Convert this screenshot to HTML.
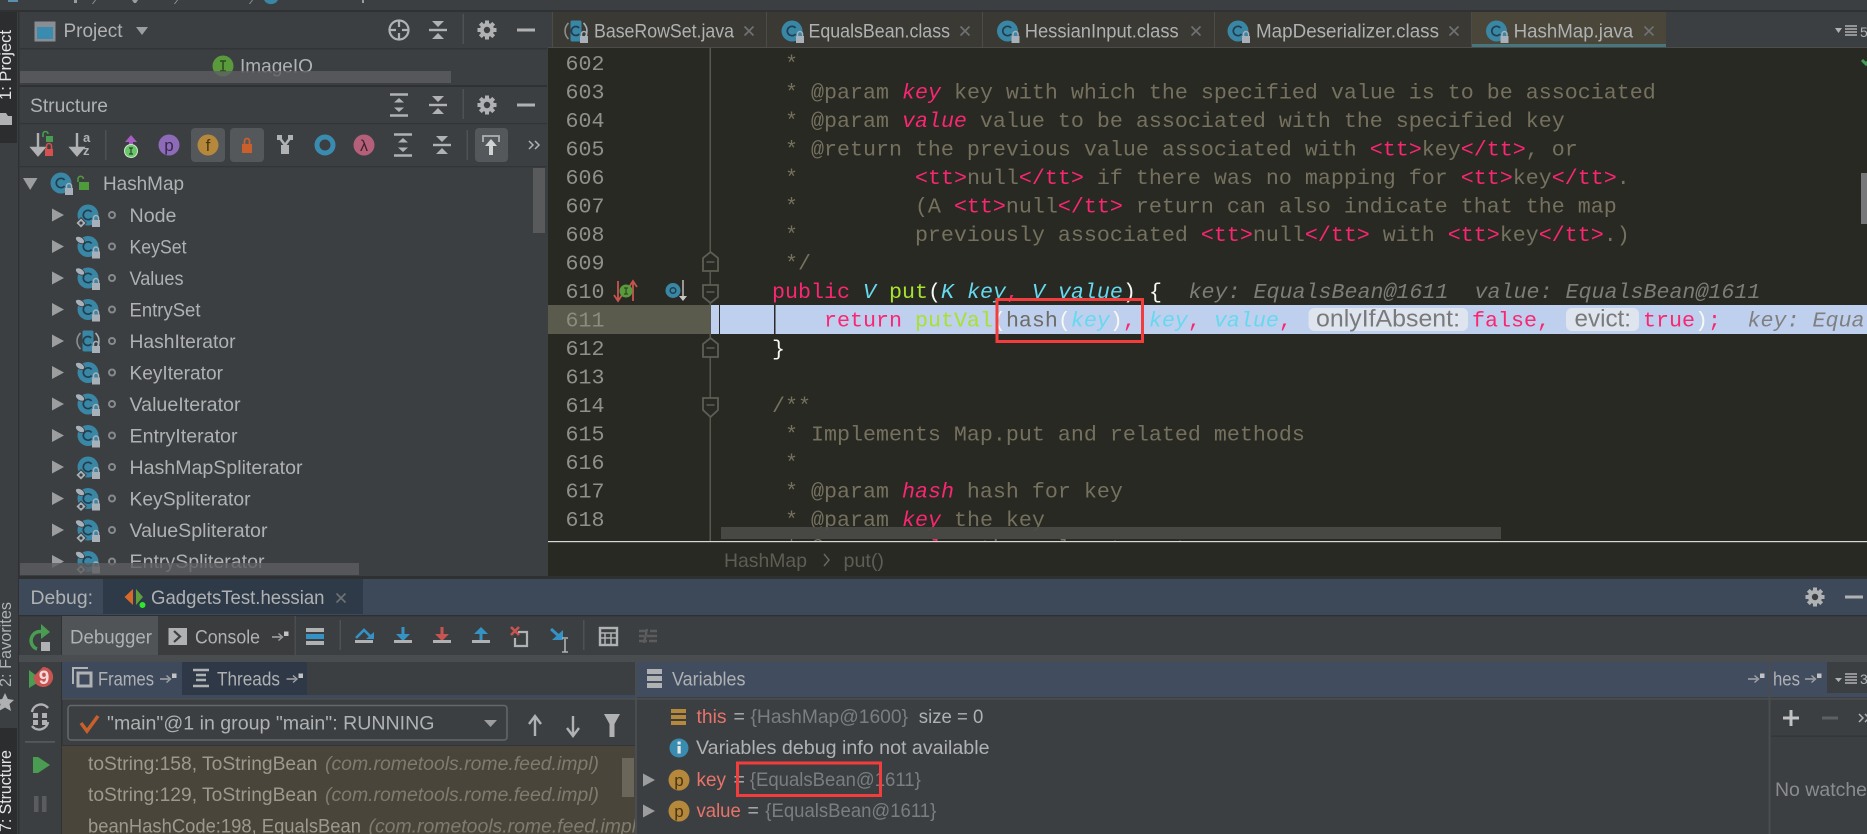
<!DOCTYPE html>
<html><head><meta charset="utf-8"><title>HashMap.java</title>
<style>
html,body{margin:0;padding:0;background:#3c3f41;width:1867px;height:834px;overflow:hidden}
svg{display:block;position:absolute;left:0;top:0}
text{white-space:pre}
.u{font-family:"Liberation Sans",sans-serif;font-size:19.5px;fill:#afb1b3}
.m{font-family:"Liberation Mono",monospace;font-size:21.66px;fill:#75715e}
.ln{fill:#8f908a}
.p{fill:#f92672}
.pi{fill:#f92672;font-style:italic}
.c{fill:#66d9ef;font-style:italic}
.g{fill:#a6e22e}
.w{fill:#f8f8f2}
.h{fill:#7d7d75;font-style:italic}
.hh{fill:#6c6c64}
.fr{fill:#9c9a8c}
.fi{fill:#7f7c6e;font-style:italic}
.v{fill:#e8736a}
.gy{fill:#7b7e80}
</style></head><body>
<svg width="1867" height="834" viewBox="0 0 1867 834" xmlns="http://www.w3.org/2000/svg">
<defs>
<clipPath id="edclip"><rect x="548" y="48" width="1319" height="493"/></clipPath>
<clipPath id="frclip"><rect x="62" y="746" width="573" height="88"/></clipPath>
<clipPath id="stclip"><rect x="19" y="166" width="528" height="410"/></clipPath>
<g id="lk"><path d="M-2.5-2V-4A2.5 2.5 0 0 1 2.5-4V-2" fill="none" stroke="#a8b1b9" stroke-width="1.5"/><rect x="-4" y="-2" width="8" height="7" fill="#a8b1b9"/></g>
<g id="cl"><circle r="10.5" fill="#3a86a5"/><path d="M3.6-3A4.7 4.7 0 1 0 3.6 3" fill="none" stroke="#1f3f50" stroke-width="1.7"/><use href="#lk" x="8" y="7"/></g>
<g id="abs"><path d="M-7.5-8A11 11 0 0 0-7.5 8" fill="none" stroke="#8a8e92" stroke-width="1.6"/><path d="M7.5-8A11 11 0 0 1 7.5 8" fill="none" stroke="#a8b1b9" stroke-width="1.6"/><rect x="-5.5" y="-10.5" width="11" height="21" rx="1.5" fill="#3a86a5"/><path d="M3.2-3A4.5 4.5 0 1 0 3.2 3" fill="none" stroke="#1f3f50" stroke-width="1.7"/><use href="#lk" x="8" y="7"/></g>
<g id="dm"><rect x="-3.7" y="-3.7" width="7.4" height="7.4" transform="rotate(45)" fill="#a8b1b9" stroke="#3c3f41"/><circle r="1.6" fill="#3c3f41"/></g>
<g id="fp"><ellipse rx="5" ry="3" transform="rotate(32)" fill="#a8b1b9" stroke="#3c3f41" stroke-width=".8"/></g>
<g id="dot"><circle r="3" fill="none" stroke="#868a8e" stroke-width="2"/></g>
<polygon id="tri" points="0,-6.5 12,0 0,6.5" fill="#9b9d9f"/>
<g id="gear"><g stroke="#afb1b3" stroke-width="4"><path d="M-9.5 0H9.5M0-9.5V9.5M-6.7-6.7 6.7 6.7M-6.7 6.7 6.7-6.7"/></g><circle r="7" fill="#afb1b3"/><circle r="3.2" fill="#3c3f41"/></g>
<g id="col"><path d="M-6-9H6L0-3ZM-6 9H6L0 3Z" fill="#afb1b3"/><rect x="-9" y="-1.2" width="18" height="2.4" fill="#afb1b3"/></g>
<g id="exp"><path d="M-9-10.5H9M-9 10.5H9" stroke="#afb1b3" stroke-width="2.6"/><path d="M-5-2.5H5L0-7ZM-5 2.5H5L0 7Z" fill="#afb1b3"/></g>
<g id="pin"><path d="M0 1H9" stroke="#a0a2a4" stroke-width="1.6"/><path d="M6.5-2.5 10.5 1 6.5 4.5" fill="none" stroke="#a0a2a4" stroke-width="1.4"/><rect x="12" y="-4.5" width="4.5" height="4.5" fill="#c0c2c4"/></g>
<g id="x"><path d="M-4.5-4.5 4.5 4.5M-4.5 4.5 4.5-4.5" stroke="#6f7274" stroke-width="1.6"/></g>
<g id="us"><rect x="-9" y="7" width="18" height="3" fill="#afb1b3"/></g>
</defs>

<!-- base -->
<rect width="1867" height="834" fill="#3c3f41"/>
<rect x="0" y="10" width="1867" height="2" fill="#2f3133"/>
<!-- top breadcrumb remnants -->
<g fill="#9a9c9e"><rect x="74" y="0" width="3" height="3"/><path d="M92 4 95 0H96L93 4Z"/><path d="M132 0 134 3H136L138 0Z"/><path d="M174 4 177 0H178L175 4Z"/><path d="M249 4 252 0H253L250 4Z"/><rect x="362" y="0" width="2" height="3"/><rect x="8" y="0" width="10" height="2" fill="#5b8fb0"/></g>
<path d="M264 0A8 8 0 0 0 278 0Z" fill="#3a86a5"/>

<!-- left stripe -->
<rect x="0" y="12" width="18" height="822" fill="#3c3f41"/>
<rect x="18" y="12" width="1.4" height="822" fill="#2f3133"/>
<rect x="0" y="12" width="17" height="131" fill="#2b2d2f"/>
<rect x="0" y="728" width="17" height="106" fill="#2b2d2f"/>
<text class="u" transform="translate(11,100) rotate(-90)" textLength="70" lengthAdjust="spacingAndGlyphs" style="font-size:17px;fill:#e6e6e6">1: Project</text>
<path d="M0 113H6L8 116H12V125H0Z" fill="#afb1b3"/>
<text class="u" transform="translate(11,687) rotate(-90)" textLength="85" lengthAdjust="spacingAndGlyphs" style="font-size:17px;fill:#afb1b3">2: Favorites</text>
<path d="M5 693 7.8 699 14 700 9.5 704 11 711 5 707.5-1 711 .5 704-4 700 2.2 699Z" fill="#afb1b3"/>
<text class="u" transform="translate(11,832) rotate(-90)" textLength="82" lengthAdjust="spacingAndGlyphs" style="font-size:17px;fill:#e6e6e6">7: Structure</text>

<!-- Project panel -->
<rect x="19" y="48" width="528" height="1.5" fill="#323437"/>
<rect x="34.5" y="21.5" width="21" height="20" fill="#8a8e92"/><rect x="37" y="27" width="16" height="12" fill="#3a8bb0"/>
<text class="u" x="63.5" y="37" textLength="59" lengthAdjust="spacingAndGlyphs">Project</text>
<path d="M136 27H148L142 35Z" fill="#9b9d9f"/>
<g stroke="#afb1b3" fill="none" stroke-width="2.2"><circle cx="399" cy="30" r="9.5"/><path d="M399 20V27M399 33V40M389 30H396M402 30H409"/></g>
<use href="#col" x="438" y="30"/>
<rect x="462.5" y="14" width="1.5" height="30" fill="#4e5254"/>
<use href="#gear" x="487" y="30"/>
<rect x="517" y="28.5" width="18" height="3" fill="#afb1b3"/>
<circle cx="223" cy="66" r="10.5" fill="#5a9a3c"/><path d="M220 61H226M223 61V71M220 71H226" stroke="#2b4a1d" stroke-width="1.5" fill="none"/>
<text class="u" x="240" y="72.5" textLength="73" lengthAdjust="spacingAndGlyphs">ImageIO</text>
<rect x="20" y="71" width="431" height="12" fill="#5c5e60" fill-opacity=".8"/>
<rect x="19" y="85" width="528" height="2" fill="#2f3133"/>

<!-- Structure panel -->
<text class="u" x="30" y="112" textLength="78" lengthAdjust="spacingAndGlyphs">Structure</text>
<use href="#exp" x="399" y="105"/><use href="#col" x="438" y="105"/>
<rect x="462.5" y="89" width="1.5" height="30" fill="#4e5254"/>
<use href="#gear" x="487" y="105"/>
<rect x="517" y="103.5" width="18" height="3" fill="#afb1b3"/>
<rect x="19" y="123" width="528" height="1.3" fill="#323437"/>
<rect x="19" y="166" width="528" height="1.3" fill="#323437"/>
<!-- toolbar -->
<path d="M38 133V150M32 148 38 155 44 148Z" stroke="#afb1b3" stroke-width="2.4" fill="#afb1b3"/>
<rect x="46" y="136" width="7" height="6" fill="#4a9c52"/><path d="M43 137V134A2.5 2.5 0 0 1 48 134" stroke="#4a9c52" stroke-width="1.6" fill="none"/>
<rect x="45" y="149" width="8" height="7" fill="#d75050"/><path d="M46.5 149V146A2.5 2.5 0 0 1 51.5 146V149" stroke="#d75050" stroke-width="1.6" fill="none"/>
<path d="M77 133V150M71 148 77 155 83 148Z" stroke="#afb1b3" stroke-width="2.4" fill="#afb1b3"/>
<text class="u" x="83" y="142" style="font-size:13px;font-weight:bold">a</text><text class="u" x="83" y="155" style="font-size:13px;font-weight:bold">z</text>
<rect x="105" y="130" width="1.5" height="30" fill="#4e5254"/>
<path d="M125 142 131 135 137 142H133V146H129V142Z" fill="#a65fc0"/>
<circle cx="131" cy="151" r="6.5" fill="#6ac66a" stroke="#cfe8cf"/><path d="M129 148H133M131 148V154M129 154H133" stroke="#274a27" stroke-width="1.2"/>
<circle cx="169" cy="145" r="10.5" fill="#8d6bb8"/><text class="u" x="169" y="151" text-anchor="middle" style="font-size:17px;fill:#35284a">p</text>
<rect x="191" y="128" width="34" height="34" rx="4" fill="#54585b"/>
<circle cx="208" cy="145" r="10.5" fill="#b5883c"/><text class="u" x="208" y="151" text-anchor="middle" style="font-size:17px;fill:#4a3510">f</text>
<rect x="230" y="128" width="34" height="34" rx="4" fill="#54585b"/>
<rect x="242" y="144" width="10" height="9" fill="#c9602c"/><path d="M244.5 144V141A2.5 2.5 0 0 1 249.5 141V144" stroke="#c9602c" stroke-width="1.8" fill="none"/>
<path d="M279 137 285 145 291 137" stroke="#afb1b3" stroke-width="2.6" fill="none"/><rect x="277" y="135" width="5" height="5" fill="#afb1b3"/><rect x="288" y="135" width="5" height="5" fill="#afb1b3"/><rect x="281" y="145" width="8" height="9" fill="#afb1b3"/>
<circle cx="325" cy="145" r="8" fill="none" stroke="#3a8bb0" stroke-width="5"/>
<circle cx="364" cy="145" r="10.5" fill="#b5607a"/><text class="u" x="364" y="151" text-anchor="middle" style="font-size:16px;fill:#3d1f2a">λ</text>
<use href="#exp" x="403" y="145"/><use href="#col" x="442" y="145"/>
<rect x="466.5" y="130" width="1.5" height="30" fill="#4e5254"/>
<rect x="475" y="128" width="33" height="34" rx="4" fill="#54585b"/>
<path d="M483 142V136H499V142" stroke="#afb1b3" stroke-width="1.8" fill="none"/><path d="M491 139 497 146H493V155H489V146H485Z" fill="#d0d2d4"/>
<path d="M529 141 533 145 529 149M535 141 539 145 535 149" stroke="#afb1b3" stroke-width="1.5" fill="none"/>

<!-- tree -->
<g clip-path="url(#stclip)">
<polygon points="23,178 37.5,178 30.2,190" fill="#9b9d9f"/>
<use href="#cl" x="61" y="183"/>
<rect x="79" y="182" width="10" height="8" fill="#4f9b3c"/><path d="M78 182V179A2.7 2.7 0 0 1 83.400 179" stroke="#4f9b3c" stroke-width="1.6" fill="none"/>
<text class="u" x="103" y="190" textLength="81" lengthAdjust="spacingAndGlyphs">HashMap</text>

<use href="#tri" x="52" y="215"/><use href="#cl" x="88" y="215"/><use href="#dm" x="81" y="223"/><use href="#dot" x="112" y="215"/><text class="u" x="129.500" y="222" textLength="47" lengthAdjust="spacingAndGlyphs">Node</text>
<use href="#tri" x="52" y="246.500"/><use href="#cl" x="88" y="246.500"/><use href="#fp" x="80" y="240"/><use href="#dot" x="112" y="246.500"/><text class="u" x="129.500" y="253.500" textLength="57" lengthAdjust="spacingAndGlyphs">KeySet</text>
<use href="#tri" x="52" y="278"/><use href="#cl" x="88" y="278"/><use href="#fp" x="80" y="271.500"/><use href="#dot" x="112" y="278"/><text class="u" x="129.500" y="285" textLength="54" lengthAdjust="spacingAndGlyphs">Values</text>
<use href="#tri" x="52" y="309.500"/><use href="#cl" x="88" y="309.500"/><use href="#fp" x="80" y="303"/><use href="#dot" x="112" y="309.500"/><text class="u" x="129.500" y="316.500" textLength="71" lengthAdjust="spacingAndGlyphs">EntrySet</text>
<use href="#tri" x="52" y="341"/><use href="#abs" x="88" y="341"/><use href="#dot" x="112" y="341"/><text class="u" x="129.500" y="348" textLength="106" lengthAdjust="spacingAndGlyphs">HashIterator</text>
<use href="#tri" x="52" y="372.500"/><use href="#cl" x="88" y="372.500"/><use href="#fp" x="80" y="366"/><use href="#dot" x="112" y="372.500"/><text class="u" x="129.500" y="379.500" textLength="93.500" lengthAdjust="spacingAndGlyphs">KeyIterator</text>
<use href="#tri" x="52" y="404"/><use href="#cl" x="88" y="404"/><use href="#fp" x="80" y="397.500"/><use href="#dot" x="112" y="404"/><text class="u" x="129.500" y="411" textLength="111" lengthAdjust="spacingAndGlyphs">ValueIterator</text>
<use href="#tri" x="52" y="435.500"/><use href="#cl" x="88" y="435.500"/><use href="#fp" x="80" y="429"/><use href="#dot" x="112" y="435.500"/><text class="u" x="129.500" y="442.500" textLength="108" lengthAdjust="spacingAndGlyphs">EntryIterator</text>
<use href="#tri" x="52" y="467"/><use href="#cl" x="88" y="467"/><use href="#dm" x="81" y="475"/><use href="#dot" x="112" y="467"/><text class="u" x="129.500" y="474" textLength="173" lengthAdjust="spacingAndGlyphs">HashMapSpliterator</text>
<use href="#tri" x="52" y="498.500"/><use href="#cl" x="88" y="498.500"/><use href="#fp" x="80" y="492"/><use href="#dm" x="81" y="506.500"/><use href="#dot" x="112" y="498.500"/><text class="u" x="129.500" y="505.500" textLength="121" lengthAdjust="spacingAndGlyphs">KeySpliterator</text>
<use href="#tri" x="52" y="530"/><use href="#cl" x="88" y="530"/><use href="#fp" x="80" y="523.500"/><use href="#dm" x="81" y="538"/><use href="#dot" x="112" y="530"/><text class="u" x="129.500" y="537" textLength="138" lengthAdjust="spacingAndGlyphs">ValueSpliterator</text>
<use href="#tri" x="52" y="561.500"/><use href="#cl" x="88" y="561.500"/><use href="#fp" x="80" y="555"/><use href="#dm" x="81" y="569.500"/><use href="#dot" x="112" y="561.500"/><text class="u" x="129.500" y="568" textLength="135" lengthAdjust="spacingAndGlyphs">EntrySpliterator</text>
</g>
<rect x="533" y="168" width="12" height="65" fill="#585a5c"/>
<rect x="20" y="563" width="339" height="12" fill="#5c5e60" fill-opacity=".8"/>

<!-- tabs -->
<rect x="548" y="12" width="1319" height="36" fill="#3c3f41"/>
<rect x="552" y="12" width="1114" height="36" fill="#3a3933"/>
<rect x="1471" y="12" width="195" height="32" fill="#4a463a"/>
<rect x="1471" y="44" width="195" height="4" fill="#47767e"/>
<g fill="#4c4c48"><rect x="552" y="12" width="1" height="36"/><rect x="766" y="12" width="1" height="36"/><rect x="982" y="12" width="1" height="36"/><rect x="1214" y="12" width="1" height="36"/><rect x="1471" y="12" width="1" height="36"/></g>
<rect x="548" y="47" width="1319" height="1.300" fill="#4c4d4a"/>
<use href="#abs" x="576" y="31"/><text class="u" x="594" y="37.500" textLength="140" lengthAdjust="spacingAndGlyphs">BaseRowSet.java</text><use href="#x" x="749" y="31"/>
<use href="#cl" x="792" y="31"/><text class="u" x="808.500" y="37.500" textLength="141.500" lengthAdjust="spacingAndGlyphs">EqualsBean.class</text><use href="#x" x="965" y="31"/>
<use href="#cl" x="1007.500" y="31"/><text class="u" x="1024.700" y="37.500" textLength="154" lengthAdjust="spacingAndGlyphs">HessianInput.class</text><use href="#x" x="1196" y="31"/>
<use href="#cl" x="1238" y="31"/><text class="u" x="1256" y="37.500" textLength="183" lengthAdjust="spacingAndGlyphs">MapDeserializer.class</text><use href="#x" x="1454" y="31"/>
<use href="#cl" x="1496.500" y="31"/><text class="u" x="1513.600" y="37.500" textLength="119.500" lengthAdjust="spacingAndGlyphs">HashMap.java</text><use href="#x" x="1649" y="31"/>
<path d="M1835 28H1842L1838.500 33Z" fill="#afb1b3"/><path d="M1845 26H1857M1845 29H1857M1845 32H1857M1845 35H1857" stroke="#afb1b3" stroke-width="1.500"/>
<text class="u" x="1860" y="37" style="font-size:14px">5</text>

<!-- editor -->
<rect x="548" y="48" width="1319" height="529" fill="#282923"/>
<rect x="548" y="305" width="163" height="29" fill="#5b5b4d"/>
<rect x="711" y="305" width="1156" height="29" fill="#bfcfee"/>
<rect x="709.500" y="48" width="1.500" height="493" fill="#58584e"/>
<rect x="719" y="305" width="1" height="29" fill="#2a2a2a"/>
<rect x="774" y="305" width="1.500" height="29" fill="#2a2a2a"/>
<!-- fold markers -->
<g fill="#282923" stroke="#5e5e54" stroke-width="1.800">
<path d="M703 271V258L710.500 252 718 258V271Z"/><path d="M703 285H718V297L710.500 303 703 297Z"/><path d="M703 357V344L710.500 338 718 344V357Z"/><path d="M703 398H718V410L710.500 417 703 410Z"/>
</g>
<path d="M706.500 262H714.500M706.500 292H714.500M706.500 348H714.500M706.500 405H714.500" stroke="#5e5e54" stroke-width="1.500"/>
<!-- gutter icons -->
<path d="M618 281V299M614 295 618 301 622 295" stroke="#c75450" stroke-width="1.800" fill="none"/>
<path d="M633 301V283M629 287 633 281 637 287" stroke="#c75450" stroke-width="1.800" fill="none"/>
<circle cx="626" cy="291" r="6.500" fill="#5a9a3c"/><path d="M624 288H628M626 288V294M624 294H628" stroke="#2b4a1d" stroke-width="1.200"/>
<circle cx="673" cy="290.500" r="7.500" fill="#3a86a5"/><circle cx="673" cy="290.500" r="2.800" fill="none" stroke="#1f3f50" stroke-width="1.500"/>
<path d="M683 280V296" stroke="#c8c8c8" stroke-width="1.400"/><path d="M679 296H687L683 301Z" fill="#c8c8c8"/>

<!-- line numbers -->
<g class="m ln">
<text class="m ln" x="565.500" y="70">602</text><text class="m ln" x="565.500" y="98.500">603</text><text class="m ln" x="565.500" y="127">604</text><text class="m ln" x="565.500" y="155.500">605</text><text class="m ln" x="565.500" y="184">606</text><text class="m ln" x="565.500" y="212.500">607</text><text class="m ln" x="565.500" y="241">608</text><text class="m ln" x="565.500" y="269.500">609</text><text class="m ln" x="565.500" y="298">610</text><text class="m" x="565.500" y="326.500" style="fill:#8c8c7e">611</text><text class="m ln" x="565.500" y="355">612</text><text class="m ln" x="565.500" y="383.500">613</text><text class="m ln" x="565.500" y="412">614</text><text class="m ln" x="565.500" y="440.500">615</text><text class="m ln" x="565.500" y="469">616</text><text class="m ln" x="565.500" y="497.500">617</text><text class="m ln" x="565.500" y="526">618</text>
</g>

<!-- code -->
<g clip-path="url(#edclip)">
<text class="m" x="720" y="70">     *</text>
<text class="m" x="720" y="98.500">     * @param <tspan class="pi">key</tspan> key with which the specified value is to be associated</text>
<text class="m" x="720" y="127">     * @param <tspan class="pi">value</tspan> value to be associated with the specified key</text>
<text class="m" x="720" y="155.500">     * @return the previous value associated with <tspan class="p">&lt;tt&gt;</tspan>key<tspan class="p">&lt;/tt&gt;</tspan>, or</text>
<text class="m" x="720" y="184">     *         <tspan class="p">&lt;tt&gt;</tspan>null<tspan class="p">&lt;/tt&gt;</tspan> if there was no mapping for <tspan class="p">&lt;tt&gt;</tspan>key<tspan class="p">&lt;/tt&gt;</tspan>.</text>
<text class="m" x="720" y="212.500">     *         (A <tspan class="p">&lt;tt&gt;</tspan>null<tspan class="p">&lt;/tt&gt;</tspan> return can also indicate that the map</text>
<text class="m" x="720" y="241">     *         previously associated <tspan class="p">&lt;tt&gt;</tspan>null<tspan class="p">&lt;/tt&gt;</tspan> with <tspan class="p">&lt;tt&gt;</tspan>key<tspan class="p">&lt;/tt&gt;</tspan>.)</text>
<text class="m" x="720" y="269.500">     */</text>
<text class="m" x="720" y="298">    <tspan class="p">public</tspan> <tspan class="c">V</tspan> <tspan class="g">put</tspan><tspan class="w">(</tspan><tspan class="c">K key</tspan><tspan class="p">,</tspan> <tspan class="c">V value</tspan><tspan class="w">)</tspan> <tspan class="w">{</tspan></text>
<text class="m h" x="1188.500" y="298">key: EqualsBean@1611</text>
<text class="m h" x="1474.500" y="298">value: EqualsBean@1611</text>
<!-- line 611 -->
<text class="m" x="720" y="326.500">        <tspan class="p">return</tspan> <tspan class="g">putVal</tspan><tspan class="w">(</tspan><tspan class="hh">hash</tspan><tspan class="w">(</tspan><tspan class="c">key</tspan><tspan class="w">)</tspan><tspan class="p">,</tspan> <tspan class="c">key</tspan><tspan class="p">,</tspan> <tspan class="c">value</tspan><tspan class="p">,</tspan></text>
<rect x="1308.500" y="308" width="159.500" height="23" rx="6" fill="#dfe5ee"/>
<text class="u" x="1316" y="326.500" textLength="144" lengthAdjust="spacingAndGlyphs" style="font-size:24.5px;fill:#7a7a7a">onlyIfAbsent:</text>
<text class="m p" x="1472" y="326.500">false,</text>
<rect x="1566" y="308" width="73" height="23" rx="6" fill="#dfe5ee"/>
<text class="u" x="1574.500" y="326.500" textLength="56.500" lengthAdjust="spacingAndGlyphs" style="font-size:24.5px;fill:#7a7a7a">evict:</text>
<text class="m p" x="1643" y="326.500">true<tspan class="w">)</tspan>;</text>
<text class="m h" x="1747.500" y="326.500" style="fill:#7f7f7f">key: Equa</text>
<text class="m w" x="720" y="355">    }</text>
<text class="m" x="720" y="412">    /**</text>
<text class="m" x="720" y="440.500">     * Implements Map.put and related methods</text>
<text class="m" x="720" y="469">     *</text>
<text class="m" x="720" y="497.500">     * @param <tspan class="pi">hash</tspan> hash for key</text>
<text class="m" x="720" y="526">     * @param <tspan class="pi">key</tspan> the key</text>
<text class="m" x="720" y="554.500">     * @param <tspan class="pi">value</tspan> the value to put</text>
</g>
<rect x="721" y="527" width="780" height="12" fill="#4a4a46" fill-opacity=".92"/>
<rect x="548" y="541" width="1319" height="1.200" fill="#d8d8d8"/>
<path d="M1856 60 1860 64 1867 56" stroke="#499c54" stroke-width="3" fill="none" transform="translate(6,0)"/>
<rect x="1861" y="173" width="6" height="51" fill="#78787a"/>
<!-- breadcrumbs -->
<text class="u" x="724" y="567" textLength="83" lengthAdjust="spacingAndGlyphs" style="fill:#5e5e55">HashMap</text>
<path d="M824 554 829 560 824 566" fill="none" stroke="#6a6a60" stroke-width="1.400"/>
<text class="u" x="843.500" y="567" textLength="40.500" lengthAdjust="spacingAndGlyphs" style="fill:#5e5e55">put()</text>
<!-- red box -->
<rect x="997" y="299.500" width="145.500" height="42" fill="none" stroke="#f33c3c" stroke-width="3"/>

<!-- debug -->
<rect x="19" y="576" width="1848" height="3" fill="#2e3032"/>
<rect x="19" y="579" width="1848" height="36" fill="#3d4958"/>
<rect x="103" y="579" width="260" height="35" fill="#2f3a48"/>
<rect x="19" y="615" width="1848" height="1.300" fill="#2c3138"/>
<text class="u" x="30.500" y="604" textLength="62.500" lengthAdjust="spacingAndGlyphs">Debug:</text>
<path d="M133 589 124.500 597 133 605Z" fill="#d9682b"/><path d="M136 589 143 597 136 605Z" fill="#5f9e3c"/><circle cx="142.500" cy="605" r="3" fill="#2ee82e"/>
<text class="u" x="151" y="604" textLength="173.500" lengthAdjust="spacingAndGlyphs">GadgetsTest.hessian</text>
<use href="#x" x="341" y="598"/>
<use href="#gear" x="1815" y="597"/>
<rect x="1845" y="595.500" width="18" height="3" fill="#afb1b3"/>

<!-- debug left bar -->
<rect x="61" y="616" width="1.400" height="218" fill="#2f3133"/>
<path d="M45 633A9 9 0 1 0 37 649" fill="none" stroke="#4a9c52" stroke-width="3.500"/><path d="M41 624 50 632 41 639Z" fill="#4a9c52"/>
<rect x="41" y="642" width="9" height="9" fill="#afb1b3"/>
<path d="M29 670 42 680 29 688Z" fill="#4a9c52"/><path d="M43 667A10 10 0 1 1 36 684L33 677Z" fill="#c75450"/><text class="u" x="44" y="684" text-anchor="middle" style="font-size:19px;font-weight:bold;fill:#f0d8d8">9</text>
<g stroke="#afb1b3" fill="none" stroke-width="2.400"><path d="M32 712A9 9 0 0 1 48 708"/><path d="M48 722A9 9 0 0 1 32 726"/></g>
<g fill="#afb1b3"><rect x="33" y="713" width="5" height="5"/><rect x="42" y="713" width="5" height="5"/><rect x="33" y="720" width="5" height="5"/><rect x="42" y="720" width="5" height="5"/></g>
<rect x="25" y="741" width="30" height="1.800" fill="#55585a"/>
<rect x="33" y="757" width="5" height="16" fill="#4a9c52"/><path d="M38 757 50 765 38 773Z" fill="#4a9c52"/>
<rect x="34" y="796" width="4.500" height="16" fill="#5a5c5e"/><rect x="42" y="796" width="4.500" height="16" fill="#5a5c5e"/>

<!-- debugger tabs -->
<rect x="62" y="616" width="96" height="39" fill="#505456"/>
<rect x="158" y="616" width="137" height="39" fill="#3a3c3e"/>
<rect x="294.500" y="616" width="1.500" height="39" fill="#4a4d4f"/>
<text class="u" x="70" y="643.500" textLength="82" lengthAdjust="spacingAndGlyphs">Debugger</text>
<rect x="168.500" y="628" width="18.500" height="17" fill="#afb1b3"/><path d="M174 631 180 636.500 174 642" fill="none" stroke="#3c3f41" stroke-width="2.200"/>
<text class="u" x="195" y="643.500" textLength="65" lengthAdjust="spacingAndGlyphs">Console</text>
<use href="#pin" x="272" y="636"/>
<rect x="306" y="628" width="18" height="4" fill="#afb1b3"/><rect x="306" y="634" width="18" height="5" fill="#3592c4"/><rect x="306" y="641" width="18" height="4" fill="#afb1b3"/>
<rect x="339.500" y="620" width="1.500" height="30" fill="#4e5254"/>
<path d="M356 638 364 630 372 638" fill="none" stroke="#3592c4" stroke-width="2.600"/><path d="M366 639H374V632Z" fill="#3592c4"/><use href="#us" x="364" y="633"/>
<path d="M403 627V636" stroke="#3592c4" stroke-width="3"/><path d="M396 634H410L403 641Z" fill="#3592c4"/><use href="#us" x="403" y="633"/>
<path d="M442 627V636" stroke="#c75450" stroke-width="3"/><path d="M435 634H449L442 641Z" fill="#c75450"/><use href="#us" x="442" y="633"/>
<path d="M481 641V632" stroke="#3592c4" stroke-width="3"/><path d="M474 634H488L481 627Z" fill="#3592c4"/><use href="#us" x="481" y="633"/>
<path d="M511 627 519 635M519 627 511 635" stroke="#c75450" stroke-width="2.600"/><path d="M518 632H527V646H515V638" fill="none" stroke="#afb1b3" stroke-width="2.200"/>
<path d="M551 629 561 638" stroke="#3592c4" stroke-width="3"/><path d="M552 640H563V630Z" fill="#3592c4"/><path d="M565 639V652M562 638H568M562 652H568" stroke="#afb1b3" stroke-width="1.600" fill="none"/>
<rect x="583" y="620" width="1.500" height="30" fill="#4e5254"/>
<rect x="600" y="628" width="17" height="17" fill="none" stroke="#afb1b3" stroke-width="2.400"/><path d="M600 633H617M600 638H617M605 633V645M611 633V645" stroke="#afb1b3" stroke-width="1.500"/>
<path d="M639 641H647M649 641H657M639 636H644M647 636H657M639 631H647M650 631H657M647 629 644 643" stroke="#5a5c5e" stroke-width="2.400" fill="none"/>
<rect x="19" y="655" width="1848" height="7" fill="#4a4d4f"/>

<!-- frames header -->
<rect x="62" y="662" width="574" height="36" fill="#3c3f41"/>
<rect x="62" y="662" width="120" height="36" fill="#3e4a5c"/>
<rect x="182" y="662" width="125" height="33" fill="#2e3846"/>
<rect x="62" y="695" width="574" height="3" fill="#3e4a5c"/>
<path d="M73 684V668H88" fill="none" stroke="#afb1b3" stroke-width="2"/><rect x="78" y="673" width="13" height="13" fill="none" stroke="#afb1b3" stroke-width="3"/>
<text class="u" x="98" y="685.500" textLength="56" lengthAdjust="spacingAndGlyphs">Frames</text>
<use href="#pin" x="160" y="678"/>
<path d="M193 670H209M196 675H206M196 680H206M193 686H209" stroke="#afb1b3" stroke-width="2.600"/>
<text class="u" x="217" y="685.500" textLength="63" lengthAdjust="spacingAndGlyphs">Threads</text>
<use href="#pin" x="286.500" y="678"/>
<rect x="636" y="662" width="1231" height="35" fill="#414c5e"/>
<rect x="635" y="662" width="2" height="172" fill="#4a4d4f"/>
<rect x="62" y="698" width="1805" height="1.800" fill="#4a4d4f"/>
<rect x="647" y="669" width="15" height="5" fill="#afb1b3"/><rect x="647" y="676" width="15" height="5" fill="#afb1b3"/><rect x="647" y="683" width="15" height="5" fill="#afb1b3"/>
<text class="u" x="672" y="685.500" textLength="73.500" lengthAdjust="spacingAndGlyphs">Variables</text>
<use href="#pin" x="1748" y="678"/>
<text class="u" x="1773" y="685.500" textLength="27" lengthAdjust="spacingAndGlyphs">hes</text>
<use href="#pin" x="1805" y="678"/>
<rect x="1827" y="662" width="40" height="31" fill="#3c3f41"/>
<path d="M1835 678H1842L1838.500 682Z" fill="#afb1b3"/><path d="M1845 674H1857M1845 677H1857M1845 680H1857M1845 683H1857" stroke="#afb1b3" stroke-width="1.500"/>
<text class="u" x="1860" y="684" style="font-size:14px">3</text>

<!-- combo -->
<rect x="68" y="705.500" width="439" height="34.500" rx="3" fill="#3c3f41" stroke="#65686a" stroke-width="1.500"/>
<path d="M81 723 87 731 98 716" fill="none" stroke="#c9602c" stroke-width="3.500"/>
<text class="u" x="107" y="729.500" textLength="327.500" lengthAdjust="spacingAndGlyphs">"main"@1 in group "main": RUNNING</text>
<path d="M484 720H497L490.500 727Z" fill="#9b9d9f"/>
<path d="M535 736V717M529 724 535 716 541 724" fill="none" stroke="#afb1b3" stroke-width="2.400"/>
<path d="M573 716V735M567 728 573 736 579 728" fill="none" stroke="#afb1b3" stroke-width="2.400"/>
<path d="M604 714H620L614.500 724V737H609.500V724Z" fill="#afb1b3"/>
<rect x="62" y="745" width="573" height="1.300" fill="#323437"/>

<!-- frame list -->
<rect x="62" y="746" width="573" height="88" fill="#4a453a"/>
<g clip-path="url(#frclip)">
<text class="u fr" x="88" y="770" textLength="229.500" lengthAdjust="spacingAndGlyphs">toString:158, ToStringBean</text>
<text class="u fi" x="325" y="770" textLength="274" lengthAdjust="spacingAndGlyphs">(com.rometools.rome.feed.impl)</text>
<text class="u fr" x="88" y="801" textLength="229.500" lengthAdjust="spacingAndGlyphs">toString:129, ToStringBean</text>
<text class="u fi" x="325" y="801" textLength="274" lengthAdjust="spacingAndGlyphs">(com.rometools.rome.feed.impl)</text>
<text class="u fr" x="88" y="832.500" textLength="273" lengthAdjust="spacingAndGlyphs">beanHashCode:198, EqualsBean</text>
<text class="u fi" x="368.500" y="832.500" textLength="274" lengthAdjust="spacingAndGlyphs">(com.rometools.rome.feed.impl)</text>
</g>
<rect x="622" y="758" width="12" height="39" fill="#6a665a"/>

<!-- variables -->
<g fill="#b5883c"><rect x="671" y="709" width="15" height="4"/><rect x="671" y="715" width="15" height="4"/><rect x="671" y="721" width="15" height="4"/></g>
<text class="u v" x="696.500" y="723" textLength="30" lengthAdjust="spacingAndGlyphs">this</text>
<text class="u" x="733.500" y="723">=</text>
<text class="u gy" x="750.500" y="723" textLength="157.500" lengthAdjust="spacingAndGlyphs">{HashMap@1600}</text>
<text class="u" x="918.800" y="723" textLength="64.500" lengthAdjust="spacingAndGlyphs">size = 0</text>
<circle cx="679" cy="748" r="9.500" fill="#3a8bb0"/><rect x="677.500" y="746" width="3.200" height="7.500" fill="#e8e8e8"/><rect x="677.500" y="741.500" width="3.200" height="3" fill="#e8e8e8"/>
<text class="u" x="696" y="754" textLength="293.500" lengthAdjust="spacingAndGlyphs">Variables debug info not available</text>
<use href="#tri" x="643" y="780"/>
<circle cx="679" cy="780" r="10.500" fill="#b5883c"/><text class="u" x="679" y="786" text-anchor="middle" style="font-size:17px;fill:#4a3510">p</text>
<text class="u v" x="696.500" y="786" textLength="29.500" lengthAdjust="spacingAndGlyphs">key</text>
<text class="u" x="733.500" y="786">=</text>
<text class="u gy" x="749.800" y="786" textLength="171" lengthAdjust="spacingAndGlyphs">{EqualsBean@1611}</text>
<use href="#tri" x="643" y="811"/>
<circle cx="679" cy="811" r="10.500" fill="#b5883c"/><text class="u" x="679" y="817" text-anchor="middle" style="font-size:17px;fill:#4a3510">p</text>
<text class="u v" x="696.500" y="817" textLength="44.300" lengthAdjust="spacingAndGlyphs">value</text>
<text class="u" x="747.500" y="817">=</text>
<text class="u gy" x="765.300" y="817" textLength="171" lengthAdjust="spacingAndGlyphs">{EqualsBean@1611}</text>
<rect x="737.500" y="763" width="143" height="32.500" fill="none" stroke="#f33c3c" stroke-width="3"/>

<!-- watches -->
<rect x="1768.500" y="662" width="2" height="172" fill="#4a4d4f"/>
<path d="M1791 710V726M1783 718H1799" stroke="#c0c2c4" stroke-width="3"/>
<rect x="1822" y="716.500" width="16" height="3" fill="#5e6163"/>
<path d="M1859 714 1863 718 1859 722M1865 714 1869 718 1865 722" stroke="#afb1b3" stroke-width="1.500" fill="none"/>
<rect x="1771" y="735.500" width="96" height="1.300" fill="#323437"/>
<text class="u" x="1775" y="796" textLength="92" lengthAdjust="spacingAndGlyphs" style="fill:#8a8c8e">No watche</text>
</svg>
</body></html>
